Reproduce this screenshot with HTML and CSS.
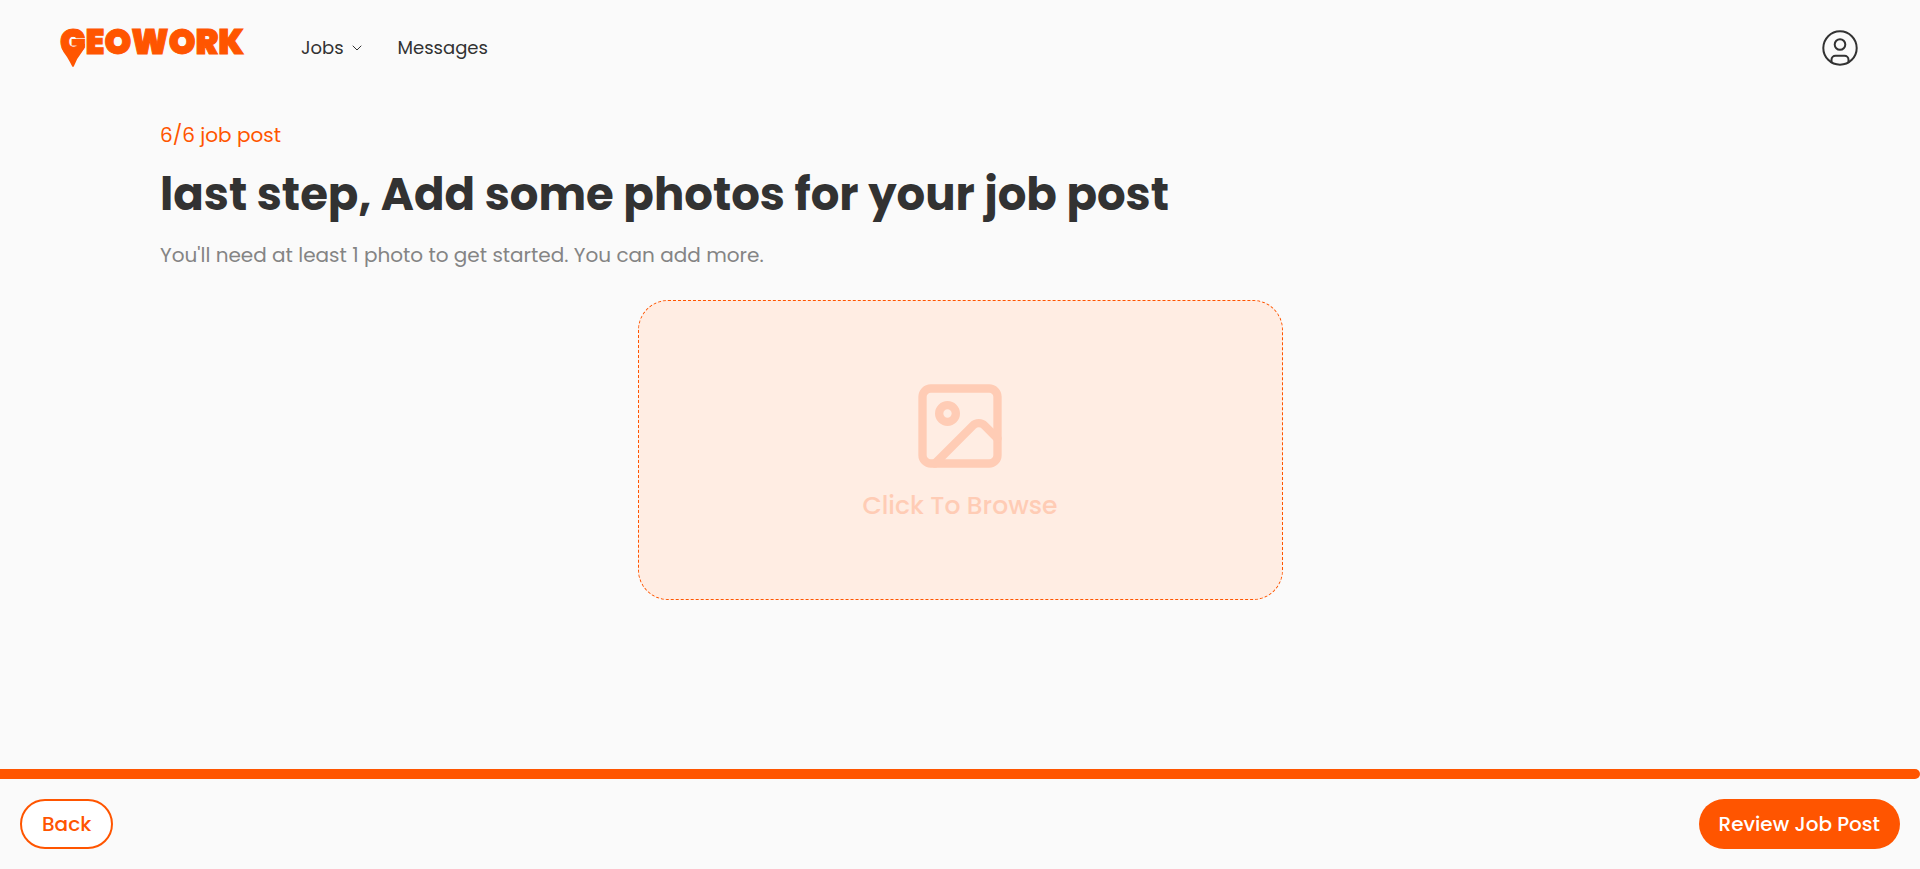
FILE: index.html
```html
<!DOCTYPE html>
<html lang="en">
<head>
<meta charset="utf-8">
<meta name="viewport" content="width=device-width, initial-scale=1">
<title>Geowork - Job post</title>
<link rel="stylesheet" href="styles.css">
</head>
<body>
<header class="header">
  <a class="logo" href="#" aria-label="Geowork home">
    <span class="logo-text">GEOWORK</span>
    <svg class="logo-pin" viewBox="0 0 26 24" aria-hidden="true"><path d="M1 3 Q3 8 7 13 Q10 18 12 22 Q13 24 14 22 Q17 14 22 8 Q25 4 25 0 L21 0 Q18 7 12 7 Q6 7 1 3Z"/></svg>
  </a>
  <nav class="nav">
    <button class="nav-item" type="button">Jobs
      <svg class="chevron" viewBox="0 0 10 6" aria-hidden="true"><path d="M1 1l4 4 4-4"/></svg>
    </button>
    <a class="nav-item" href="#">Messages</a>
  </nav>
  <button class="account" type="button" aria-label="Account">
    <svg viewBox="0 0 36 36" aria-hidden="true">
      <circle cx="18" cy="18" r="16.7"/>
      <circle cx="18" cy="14.5" r="5.3"/>
      <path d="M9.5 32.2v-2.4a4 4 0 0 1 4-4h9a4 4 0 0 1 4 4v2.4"/>
    </svg>
  </button>
</header>
<main class="main">
  <p class="step">6/6 job post</p>
  <h1 class="title">last step, Add some photos for your job post</h1>
  <p class="hint">You'll need at least 1 photo to get started. You can add more.</p>
  <label class="upload" for="photos">
    <svg class="upload-icon" viewBox="0 0 24 24" aria-hidden="true">
      <rect x="3" y="3" width="18" height="18" rx="2"/>
      <circle cx="9" cy="9" r="2"/>
      <path d="m21 15-3.086-3.086a2 2 0 0 0-2.828 0L6 21"/>
    </svg>
    <span>Click To Browse</span>
    <input class="file-input" id="photos" type="file" accept="image/*" multiple>
  </label>
</main>
<footer class="footer">
  <div class="progress"></div>
  <div class="actions">
    <button class="btn btn-outline" type="button">Back</button>
    <button class="btn btn-solid" type="button">Review Job Post</button>
  </div>
</footer>
</body>
</html>
```
FILE: styles.css
```css
* {
  box-sizing: border-box;
}

body {
  margin: 0;
  min-height: 100vh;
  display: flex;
  flex-direction: column;
  background: #fafafa;
  color: #323232;
  font-family: Poppins, Inter, "Open Sans", sans-serif;
}

button {
  font: inherit;
  color: inherit;
  cursor: pointer;
}

svg {
  display: block;
  fill: none;
  stroke: currentColor;
  stroke-linecap: round;
  stroke-linejoin: round;
}

.header {
  display: flex;
  align-items: center;
  height: 96px;
  padding: 0 62px 0 60px;
}

.logo {
  position: relative;
  margin-right: 57px;
  padding-bottom: 12px;
  color: #ff5500;
  text-decoration: none;
}

.logo-text {
  display: block;
  font-size: 34px;
  font-weight: 900;
  line-height: 28px;
  -webkit-text-stroke: 1px #ff5500;
}

.logo-pin {
  position: absolute;
  left: 0;
  bottom: 0;
  width: 26px;
  height: 24px;
  fill: currentColor;
  stroke: none;
}

.nav {
  display: flex;
  align-items: center;
  gap: 36px;
}

.nav-item {
  display: flex;
  align-items: center;
  gap: 8px;
  padding: 0;
  border: 0;
  background: none;
  color: #323232;
  font-size: 18px;
  line-height: 28px;
  text-decoration: none;
}

.chevron {
  width: 10px;
  height: 6px;
}

.account {
  width: 36px;
  height: 36px;
  margin-left: auto;
  padding: 0;
  border: 0;
  background: none;
}

.account svg {
  width: 36px;
  height: 36px;
  stroke-width: 2;
}

.main {
  flex: 1;
  display: flex;
  flex-direction: column;
  padding: 24px 160px;
}

.step,
.hint {
  margin: 0;
  font-size: 20px;
  font-weight: 400;
  line-height: 30px;
}

.step {
  color: #ff5500;
}

.title {
  margin: 8px 0;
  font-size: 45px;
  font-weight: 700;
  line-height: 74px;
}

.hint {
  color: #848484;
}

.upload {
  display: flex;
  flex-direction: column;
  align-items: center;
  justify-content: center;
  gap: 12px;
  align-self: center;
  width: 100%;
  max-width: 645px;
  min-height: 300px;
  margin-top: 30px;
  border: 1px dashed #ff5500;
  border-radius: 30px;
  background: #ffede3;
  color: #ffccb5;
  font-size: 25px;
  font-weight: 500;
  line-height: 36px;
  cursor: pointer;
}

.upload-icon {
  width: 100px;
  height: 100px;
  stroke-width: 2;
}

.file-input {
  position: absolute;
  width: 1px;
  height: 1px;
  opacity: 0;
}

.progress {
  height: 10px;
  border-radius: 0 5px 5px 0;
  background: #ff5500;
}

.actions {
  display: flex;
  justify-content: space-between;
  padding: 20px;
}

.btn {
  height: 50px;
  padding: 0 20px;
  border: 0;
  border-radius: 25px;
  font-size: 20px;
  font-weight: 500;
}

.btn-outline {
  border: 2px solid #ff5500;
  background: #ffffff;
  color: #ff5500;
}

.btn-solid {
  background: #ff5500;
  color: #ffffff;
}
```
